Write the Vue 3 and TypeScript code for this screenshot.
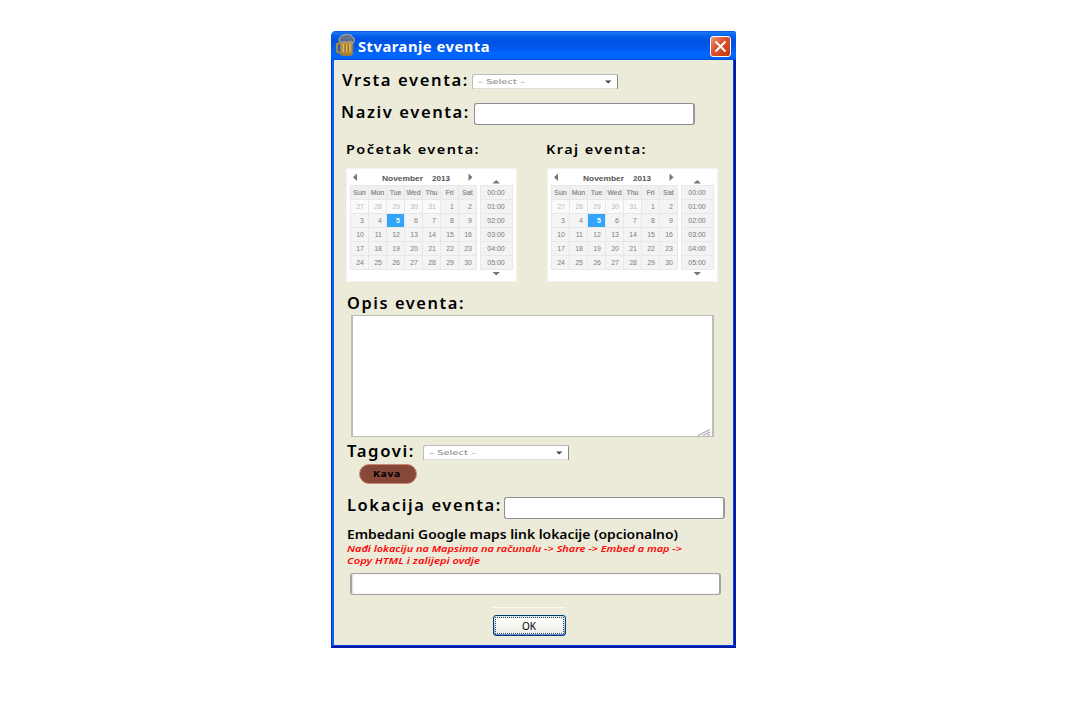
<script setup lang="ts">
interface Day { n: number; muted: boolean; selected: boolean }

const weekdays: string[] = ['Sun', 'Mon', 'Tue', 'Wed', 'Thu', 'Fri', 'Sat']
const days: Day[] = Array.from({ length: 35 }, (_, i) => ({
  n: i < 5 ? 27 + i : i - 4,
  muted: i < 5,
  selected: i === 9,
}))
const times: string[] = ['00:00', '01:00', '02:00', '03:00', '04:00', '05:00']
const calendars = [
  { title: 'Početak eventa:', width: 134, x: 0 },
  { title: 'Kraj eventa:', width: 101, x: -1 },
]
</script>

<template>
  <main class="page">
    <section class="window">
      <header class="titlebar">
        <svg class="beer" width="20" height="23" viewBox="0 0 20 23">
          <path d="M4.500 9.500H2Q1 9.500 1 11V17Q1 18.500 3 18.500H5" fill="none" stroke="#6f6448" stroke-width="2.600" />
          <path d="M4.500 9.500H2Q1 9.500 1 11V17Q1 18.500 3 18.500H5" fill="none" stroke="#c4a455" stroke-width="1.200" />
          <path d="M4 7H17L16.500 20Q16.300 21.500 14 21.500H7Q4.700 21.500 4.500 20Z" fill="#b8923c" stroke="#8a7a52" stroke-width="1.200" />
          <path d="M7.500 10V18M10.700 10V18M13.900 10V18" stroke="#dcb759" stroke-width="1.400" />
          <path d="M9.100 10V18M12.300 10V18" stroke="#80642c" stroke-width=".8" />
          <path d="M5 20H16" stroke="#8d7030" />
          <path d="M3.500 7.500Q2 5.300 4.500 3.500Q5 1 8 1.500Q10 -.3 12.500 1Q15.500 .5 16.500 3.300Q19.300 4.500 18 7.500Q17.500 9.500 16 8.500Q15 7 13 7.500Q11 9 8.500 7.600Q5 9 3.500 7.500Z" fill="#5f6c85" stroke="#a09f9b" stroke-width="1.200" />
          <path d="M6 4.500Q8 3 9 4.500M11 4Q13 2.500 14.500 4.500" fill="none" stroke="#7482a0" />
        </svg>
        <svg class="title" width="140" height="24"><text x="0" y="17" textLength="132" lengthAdjust="spacingAndGlyphs">Stvaranje eventa</text></svg>
        <button class="close" aria-label="Zatvori">
          <svg width="13" height="13" viewBox="0 0 13 13"><path d="M1.500 1.500L11.500 11.500M11.500 1.500L1.500 11.500" stroke="#fff" stroke-width="2" /></svg>
        </button>
      </header>

      <div class="row kind">
        <svg class="label" width="130" height="24"><text x="0" y="17" textLength="127" lengthAdjust="spacingAndGlyphs">Vrsta eventa:</text></svg>
        <div class="select"><svg width="146" height="15"><text x="6" y="10" textLength="47" lengthAdjust="spacingAndGlyphs">– Select –</text><path d="M133 6.500H139.500L136.200 9.500Z" fill="#444" /></svg></div>
      </div>
      <div class="row name">
        <svg class="label" width="132" height="24"><text x="0" y="17" textLength="129" lengthAdjust="spacingAndGlyphs">Naziv eventa:</text></svg>
        <div class="field"></div>
      </div>

      <div class="row dates">
        <div v-for="c in calendars" :key="c.title" class="date">
          <svg class="label small" width="150" height="24"><text :x="c.x" y="17" :textLength="c.width" lengthAdjust="spacingAndGlyphs">{{ c.title }}</text></svg>
          <div class="calendar">
            <div class="month">
              <div class="monthbar">
                <svg width="6" height="8"><path d="M5 .5V8L1 4.200Z" fill="#777" /></svg>
                <svg class="monthname" width="70" height="12"><text x="-1" y="7.500" textLength="41" lengthAdjust="spacingAndGlyphs">November</text><text x="49" y="7.500" textLength="18" lengthAdjust="spacingAndGlyphs">2013</text></svg>
                <svg width="6" height="8"><path d="M.5 .5V8L4.500 4.200Z" fill="#777" /></svg>
              </div>
              <div class="days">
                <span v-for="w in weekdays" :key="w" class="weekday">{{ w }}</span>
                <span v-for="(d, i) in days" :key="i" :class="{ muted: d.muted, selected: d.selected }">{{ d.n }}</span>
              </div>
            </div>
            <div class="clock">
              <svg width="8" height="4"><path d="M-.5 3.500H7L3.200 0Z" fill="#777" /></svg>
              <div class="times"><span v-for="t in times" :key="t">{{ t }}</span></div>
              <svg width="8" height="4"><path d="M-.5 0H7L3.200 3.500Z" fill="#777" /></svg>
            </div>
          </div>
        </div>
      </div>

      <div class="row about">
        <svg class="label" width="130" height="23"><text x="0" y="17" textLength="118" lengthAdjust="spacingAndGlyphs">Opis eventa:</text></svg>
        <div class="textarea">
          <svg width="14" height="8" viewBox="0 0 14 8"><path d="M0 7.500L12 1.500M5 7.500L12 4M9 7.500L12 6.500" stroke="#aaa" stroke-width="1.200" /></svg>
        </div>
      </div>

      <div class="row tags">
        <svg class="label" width="76" height="24"><text x="0" y="17" textLength="68" lengthAdjust="spacingAndGlyphs">Tagovi:</text></svg>
        <div class="select"><svg width="146" height="15"><text x="6" y="10" textLength="47" lengthAdjust="spacingAndGlyphs">– Select –</text><path d="M133 6.500H139.500L136.200 9.500Z" fill="#444" /></svg></div>
      </div>
      <div class="tag"><svg width="30" height="14"><text x="0" y="11" textLength="28" lengthAdjust="spacingAndGlyphs">Kava</text></svg></div>

      <div class="row place">
        <svg class="label" width="156" height="24"><text x="0" y="17" textLength="155" lengthAdjust="spacingAndGlyphs">Lokacija eventa:</text></svg>
        <div class="field"></div>
      </div>

      <div class="embed">
        <svg class="heading" width="350" height="20"><text x="0" y="15" textLength="331" lengthAdjust="spacingAndGlyphs">Embedani Google maps link lokacije (opcionalno)</text></svg>
        <svg class="hint" width="350" height="29"><text x="0" y="8" textLength="335" lengthAdjust="spacingAndGlyphs">Nađi lokaciju na Mapsima na računalu -&gt; Share -&gt; Embed a map -&gt;</text><text x="0" y="20" textLength="133" lengthAdjust="spacingAndGlyphs">Copy HTML i zalijepi ovdje</text></svg>
        <div class="field link"></div>
      </div>

      <footer class="actions">
        <button class="ok"><span><svg width="16" height="13"><text x="0" y="11" textLength="14" lengthAdjust="spacingAndGlyphs">OK</text></svg></span></button>
      </footer>
    </section>
  </main>
</template>

<style>
body { margin: 0; background: #fff; }
</style>

<style scoped>
* { box-sizing: border-box; }
svg { display: block; flex: none; overflow: visible; }
.page { height: 720px; padding: 31px 0 0 331px; overflow: hidden; }
.window {
  width: 405px; height: 617px;
  border: solid transparent; border-width: 0 3px 3px;
  border-radius: 5px 3px 0 0;
  background:
    linear-gradient(#ecebda, #ecebda) padding-box,
    linear-gradient(transparent 614px, #0842d6 614px, #0842d6 615px, #0019a8 615px) border-box,
    linear-gradient(90deg, #0831d9 1px, #0562f5 1px, #0562f5 3px, #0842d6 3px, #0842d6 403px, #0019a8 403px) border-box;
  font-family: "Noto Sans", sans-serif;
}
.titlebar {
  display: flex; align-items: flex-start; height: 29px; margin: 0 -3px; padding-left: 5px;
  border-radius: 5px 3px 0 0;
  background: linear-gradient(#0c5bd8 0, #1a78f0 2px, #0765ee 4px, #0054e3 8px, #0055e8 15px, #0066ff 22px, #0063fb 27px, #004fd8 29px);
}
.beer { margin-top: 3px; }
.title { margin: 4px 0 0 2px; fill: #fff; font-size: 15px; font-weight: 700; letter-spacing: .5px; }
.close {
  display: flex; align-items: center; justify-content: center; width: 21px; height: 21px;
  margin: 5px 5px 0 auto; padding: 0; border: 1px solid #fff; border-radius: 3px;
  background: linear-gradient(135deg, #ee9a80, #dc5532 40%, #c93509);
}
.row { display: flex; align-items: flex-start; }
.label { fill: #000; font-size: 15.500px; font-weight: 600; letter-spacing: 1.500px; }
.small { font-size: 13px; letter-spacing: 1.300px; }

.kind { height: 38px; padding-left: 8px; }
.kind .label { margin-top: 9px; }
.kind .select { margin-top: 14px; }
.select {
  width: 146px; height: 15px; background: #fff; border-radius: 2px 2px 0 0;
  box-shadow: inset 1px 1px #bbb, inset -1px 0 #888, inset 0 -1px #ddd;
  fill: #808080; font: 6.800px "DejaVu Sans", sans-serif;
}
.name { height: 37px; padding-left: 7px; }
.name .label { margin-top: 3px; }
.name .field { margin: 5px 0 0 1px; width: 221px; }
.field { width: 222px; height: 22px; background: #fff; border: 1px solid #8f8f91; border-right: 2px solid #999; border-radius: 3px; }

.dates { height: 155px; gap: 30px; padding: 2px 0 0 12px; }
.date { width: 171px; }
.calendar {
  display: flex; height: 114px; gap: 4px; margin-top: 7px; padding: 3px 5px 5px 4px;
  background: #fff; box-shadow: inset 0 0 0 1px #f2f2f7;
  font-family: "Liberation Sans", Arial, sans-serif; font-size: 7px;
}
.month { width: 126px; flex: none; }
.monthbar { display: flex; align-items: flex-start; justify-content: space-between; height: 14px; padding: 2px 2px 0; }
.monthbar .monthname { margin: 0 0 0 10px; fill: #555; font-size: 8px; font-weight: 700; }
.days { display: grid; grid-template-columns: repeat(7, 18px); grid-auto-rows: 14px; border-left: 1px solid #e8e8e8; border-top: 1px solid #e8e8e8; width: 127px; }
.days span {
  padding-right: 4px; border: solid #e8e8e8; border-width: 0 1px 1px 0;
  background: #f4f4f4; color: #808080; text-align: right; line-height: 13px;
}
.days .weekday { padding: 0; background: #f0f0f0; color: #888; text-align: center; font-size: 6.900px; -webkit-text-stroke: .2px #888; }
.days .muted { background: #fafafa; color: #bbb; }
.days .selected { background: #32a4fa; color: #fff; font-weight: 700; }
.clock { display: flex; flex-direction: column; align-items: center; width: 33px; padding-top: 9px; }
.times { width: 33px; margin: 1px 0 2px; border: 1px solid #e8e8e8; border-bottom: 0; background: #f3f3f3; color: #777; }
.times span { display: block; height: 14px; padding-right: 1px; border-bottom: 1px solid #e8e8e8; text-align: center; line-height: 14px; }

.about { flex-direction: column; height: 147px; padding: 2px 0 0 13px; }
.textarea {
  display: flex; align-items: flex-end; justify-content: flex-end;
  width: 363px; height: 122px; margin-left: 4px; background: #fff;
  border: solid #bdbdbd; border-width: 1px 2px 1px;
}
.tags { height: 27px; padding-left: 13px; }
.tags .label { margin-top: 3px; }
.tags .select { margin-top: 8px; }
.tag {
  display: flex; width: 58px; height: 20px; margin-left: 25px; padding: 1px 0 0 13px;
  border: 1px solid #c98774; border-radius: 10px; background: #864838;
  fill: #000; font: 700 9.500px "Noto Sans", sans-serif; letter-spacing: .6px;
}
.place { height: 38px; padding: 10px 0 0 13px; }
.place .field { margin: 3px 0 0 1px; width: 221px; }
.embed { height: 73px; padding: 2px 0 0 13px; }
.heading { font-size: 12.500px; font-weight: 600; }
.hint { fill: #ff0505; font-size: 9.200px; font-weight: 600; font-style: italic; }
.link { width: 371px; margin-left: 3px; border: solid #a5a5a5; border-width: 1px 2px; box-shadow: inset 1px 0 2px #ddd; }
.actions { width: 73px; margin: 12px 0 0 159px; padding-top: 7px; border-top: 1px solid #fbfbf5; }
.ok {
  display: block; width: 73px; height: 21px; padding: 1px; border: 1px solid #003c74; border-radius: 3px;
  background: linear-gradient(#cee7ff, #bcd4f6 60%, #6982ee);
}
.ok span { display: flex; align-items: center; justify-content: center; height: 17px; border: 1px dotted #444; background: linear-gradient(#fdfdfb, #eeeee8); font: 11px "Noto Sans", sans-serif; }
</style>
